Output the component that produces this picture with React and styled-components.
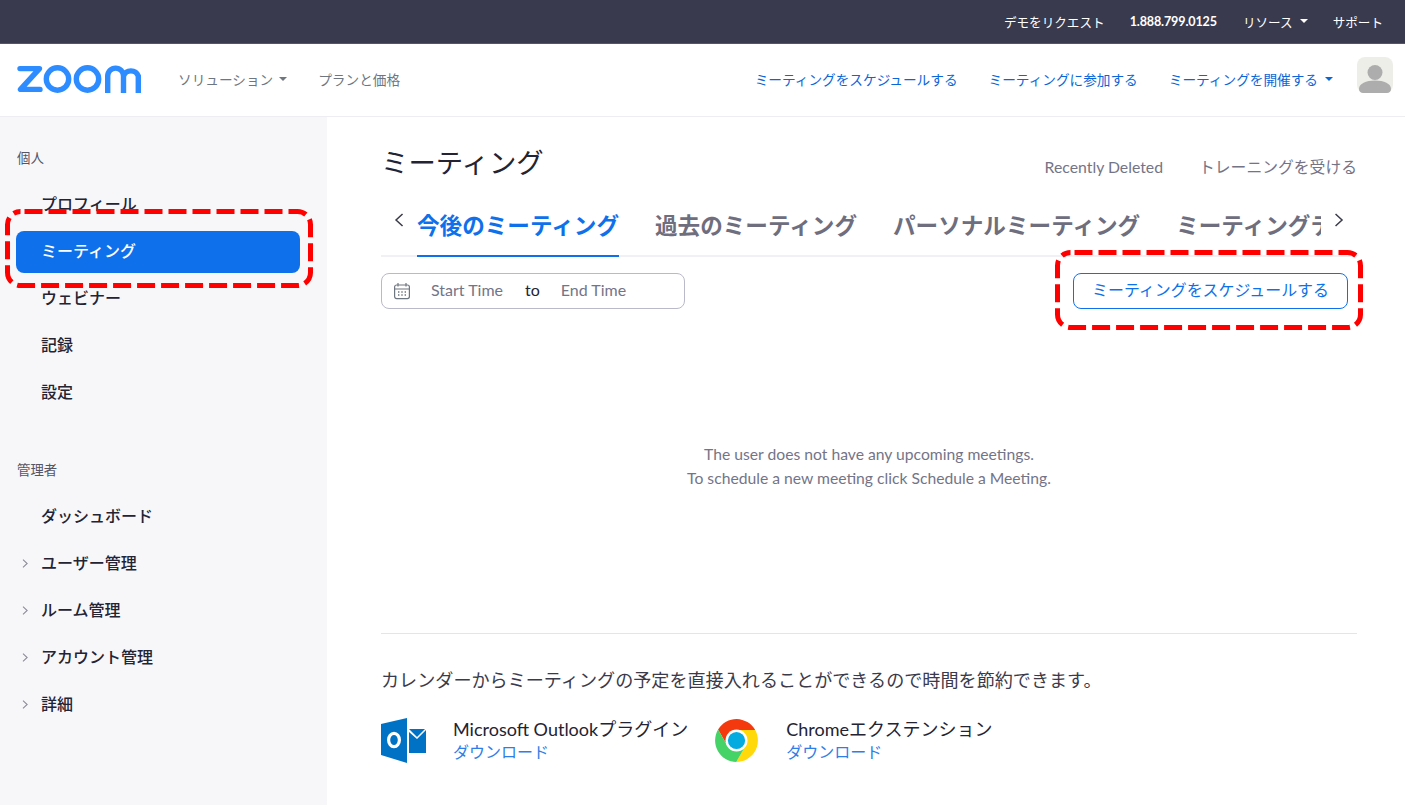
import React from "react";
import styled, { createGlobalStyle } from "styled-components";

const Global = createGlobalStyle`
  html, body { margin: 0; padding: 0; background: #fff; overflow: hidden; }
  body { font-family: Lato, "Noto Sans CJK JP", sans-serif; color: #232333; }
  * { box-sizing: border-box; }
`;

const Page = styled.div`
  position: relative;
  width: 1405px;
  height: 805px;
  display: flex;
  flex-direction: column;
  overflow: hidden;
`;

const TopBar = styled.div`
  height: 44px;
  flex: none;
  background: #393a4e;
  border-bottom: 1px solid #55556a;
  display: flex;
  align-items: center;
  justify-content: flex-end;
  padding: 0 22px 1px 0;
  color: #fff;
  font-size: 12.6px;
`;
const TopItem = styled.span`
  margin-left: ${(p) => p.$gap ?? 26}px;
  font-weight: ${(p) => (p.$strong ? 700 : 400)};
  letter-spacing: ${(p) => (p.$strong ? "-0.15px" : "0")};
  display: flex;
  align-items: center;
  white-space: nowrap;
`;
const Caret = styled.i`
  display: inline-block;
  width: 0;
  height: 0;
  margin-left: ${(p) => p.$gap ?? 6}px;
  border-left: 4px solid transparent;
  border-right: 4px solid transparent;
  border-top: 4px solid ${(p) => p.$color};
`;

const Nav = styled.div`
  height: 73px;
  flex: none;
  background: #fff;
  border-bottom: 1px solid #ededf2;
  display: flex;
  align-items: center;
  font-size: 13.65px;
  padding: 0 12px 3px 17px;
`;
const Logo = styled.svg`
  width: 124px;
  height: 28px;
  flex: none;
  margin-right: 37px;
`;
const NavLink = styled.a`
  display: flex;
  align-items: center;
  white-space: nowrap;
  color: ${(p) => (p.$blue ? "#0b66d8" : "#6e7680")};
  margin-right: ${(p) => p.$gap ?? 0}px;
`;
const Spacer = styled.div`
  flex: 1;
`;
const Avatar = styled.svg`
  width: 36px;
  height: 36px;
  flex: none;
  margin: 0 0 7px 24px;
`;

const Body = styled.div`
  flex: 1;
  display: flex;
  min-height: 0;
`;

const Sidebar = styled.aside`
  width: 327px;
  flex: none;
  background: #f7f7fa;
  padding: 30px 27px 0 16px;
`;
const SideHead = styled.div`
  height: 22px;
  line-height: 22px;
  font-size: 13.4px;
  color: #555566;
  padding-left: 1px;
  margin-bottom: 15px;
  margin-top: ${(p) => p.$top ?? 0}px;
`;
const SideItem = styled.div`
  height: 42px;
  margin-bottom: 5px;
  border-radius: 8px;
  display: flex;
  align-items: center;
  padding: 0 0 5px 5px;
  font-size: 16px;
  font-weight: 500;
  color: ${(p) => (p.$active ? "#fff" : "#232333")};
  background: ${(p) => (p.$active ? "#0e71eb" : "transparent")};
`;
const ArrowSlot = styled.span`
  width: 20px;
  flex: none;
  display: flex;
  align-items: center;
  padding: 3px 0 0 1px;
`;

const Main = styled.main`
  flex: 1;
  padding: 26px 48px 0 54px;
  min-width: 0;
`;
const TitleRow = styled.div`
  height: 40px;
  display: flex;
  justify-content: space-between;
  align-items: center;
  margin-bottom: 26px;
`;
const Title = styled.h1`
  margin: 0;
  font-size: 27.4px;
  line-height: 40px;
  font-weight: 400;
  color: #232333;
`;
const TitleLinks = styled.div`
  display: flex;
  align-items: baseline;
  gap: 36px;
  font-size: 15.8px;
  color: #747487;
  padding-top: 6px;
`;

const TabRow = styled.div`
  height: 48px;
  display: flex;
  box-shadow: inset 0 -2px 0 #f0f0f5;
`;
const Chevron = styled.button`
  width: 36px;
  flex: none;
  border: 0;
  background: none;
  padding: 4px 0 0;
  display: flex;
  justify-content: center;
  align-items: flex-start;
`;
const TabStrip = styled.div`
  flex: 1;
  min-width: 0;
  overflow: hidden;
  display: flex;
  gap: 36px;
`;
const Tab = styled.div`
  flex: none;
  height: 48px;
  line-height: 34px;
  font-size: 22.6px;
  font-weight: 700;
  white-space: nowrap;
  color: ${(p) => (p.$active ? "#0e71eb" : "#6e6e7e")};
  border-bottom: 2px solid ${(p) => (p.$active ? "#0e71eb" : "transparent")};
`;

const Toolbar = styled.div`
  margin-top: 16px;
  height: 36px;
  display: flex;
  justify-content: space-between;
`;
const Picker = styled.div`
  width: 304px;
  border: 1px solid #bab9c9;
  border-radius: 8px;
  display: flex;
  align-items: center;
  padding: 0 0 0 11px;
  font-size: 16px;
  color: #747487;
`;
const PickerField = styled.span`
  margin-left: ${(p) => p.$gap}px;
  margin-top: -4px;
  color: ${(p) => (p.$dark ? "#232333" : "#747487")};
`;
const OutlineButton = styled.button`
  width: 275px;
  margin-right: 9px;
  border: 1px solid #0e71eb;
  border-radius: 8px;
  background: #fff;
  color: #0e71eb;
  font: inherit;
  font-size: 15.95px;
  padding: 0 0 5px;
`;

const Empty = styled.div`
  margin-top: 133px;
  text-align: center;
  font-size: 15.7px;
  line-height: 24px;
  color: #747487;
`;
const Divider = styled.hr`
  margin: 143px 0 0;
  border: 0;
  border-top: 1px solid #e4e4ec;
`;
const Promo = styled.p`
  margin: 34px 0 0;
  font-size: 18.1px;
  line-height: 24px;
  color: #3a3a4a;
`;
const Plugins = styled.div`
  margin-top: 24px;
  display: flex;
  gap: 27px;
`;
const Plugin = styled.div`
  display: flex;
  height: 48px;
`;
const PluginIcon = styled.div`
  width: ${(p) => p.$w}px;
  flex: none;
  display: flex;
  align-items: center;
`;
const PluginText = styled.div`
  font-size: 18px;
  line-height: 23px;
  color: #232333;
  padding-top: 2px;
`;
const Download = styled.a`
  display: block;
  font-size: 16px;
  line-height: 21px;
  color: #2f7de8;
`;

const Highlight = styled.svg`
  position: absolute;
  left: ${(p) => p.$x}px;
  top: ${(p) => p.$y}px;
  width: ${(p) => p.$w}px;
  height: ${(p) => p.$h}px;
  pointer-events: none;
`;

const Mark = ({ x, y, w, h }) => (
  <Highlight $x={x} $y={y} $w={w} $h={h} viewBox={`0 0 ${w} ${h}`}>
    <rect
      x="2.5"
      y="2.5"
      width={w - 5}
      height={h - 5}
      rx="13"
      fill="none"
      stroke="#fe0000"
      strokeWidth="5"
      strokeDasharray="18 6"
      strokeDashoffset="-4"
    />
  </Highlight>
);

const ChevronIcon = ({ dir, size = 14, color = "#3a3a4a", width = 1.5 }) => (
  <svg width={size * 0.72} height={size} viewBox="0 0 10 14" fill="none">
    <path
      d={dir === "left" ? "M8.5 1 L2 7 L8.5 13" : "M1.5 1 L8 7 L1.5 13"}
      stroke={color}
      strokeWidth={width}
    />
  </svg>
);

const Arrow = () => (
  <ArrowSlot>
    <ChevronIcon dir="right" size={9} color="#8a8a98" width={1.6} />
  </ArrowSlot>
);

const CalendarIcon = () => (
  <svg width="18" height="18" viewBox="0 0 18 18" fill="none" stroke="#6e7680" strokeWidth="1.2">
    <rect x="1.6" y="3" width="14.8" height="13.6" rx="2" />
    <path d="M1.6 7 H16.4 M5 1 V4.4 M13 1 V4.4" />
    <path d="M5 10 h1.4 M8.3 10 h1.4 M11.6 10 h1.4 M5 13 h1.4 M8.3 13 h1.4 M11.6 13 h1.4" strokeWidth="1.4" />
  </svg>
);

const OutlookIcon = () => (
  <svg width="46" height="46" viewBox="0 0 46 46" style={{ display: "block" }}>
    <path d="M0 7 L26 1 V46 L0 38 Z" fill="#0072c6" />
    <path d="M28 12 H44 L36 20 Z M28 15 L36 22 L45 13 V36 H28 Z" fill="#0072c6" />
    <ellipse cx="13" cy="23" rx="5.4" ry="6.6" fill="none" stroke="#fff" strokeWidth="3.2" />
  </svg>
);

const ChromeIcon = () => (
  <svg width="43" height="43" viewBox="-21.5 -21.5 43 43" style={{ display: "block" }}>
    <path d="M0 -10.5 L18.7 -10.5 A21.5 21.5 0 0 0 -18.44 -10.95 L-9.1 5.25 Z" fill="#f4390f" />
    <path d="M18.7 -10.5 A21.5 21.5 0 0 1 -0.26 21.45 L9.1 5.25 L0 -10.5 Z" fill="#ffd90a" />
    <path d="M-0.26 21.45 A21.5 21.5 0 0 1 -18.44 -10.95 L-9.1 5.25 L9.1 5.25 Z" fill="#45d267" />
    <circle r="11" fill="#fff" />
    <circle r="8.6" fill="#04abe0" />
  </svg>
);

const personal = ["プロフィール", "ミーティング", "ウェビナー", "記録", "設定"];
const admin = [
  ["ダッシュボード", false],
  ["ユーザー管理", true],
  ["ルーム管理", true],
  ["アカウント管理", true],
  ["詳細", true],
];
const tabs = ["今後のミーティング", "過去のミーティング", "パーソナルミーティング", "ミーティングテンプレート"];

export default function App() {
  return (
    <Page>
      <Global />
      <TopBar>
        <TopItem>デモをリクエスト</TopItem>
        <TopItem $strong $gap={25}>1.888.799.0125</TopItem>
        <TopItem>
          リソース
          <Caret $color="#fff" $gap={7} />
        </TopItem>
        <TopItem $gap={25}>サポート</TopItem>
      </TopBar>
      <Nav>
        <Logo viewBox="0 0 124 28" fill="none" stroke="#2d8cff" strokeWidth="5.4">
          <path d="M3 3.6 H22.5 L3.5 24.4 H23" strokeLinejoin="round" strokeLinecap="round" />
          <circle cx="40.5" cy="14" r="11.2" />
          <circle cx="70.5" cy="14" r="11.2" />
          <path d="M90.7 28 V11 A7.9 7.9 0 0 1 106.5 11 V28 M106.5 11 A7.9 7.9 0 0 1 121.3 11 V28" />
        </Logo>
        <NavLink $gap={31}>
          ソリューション
          <Caret $color="#6e7680" />
        </NavLink>
        <NavLink>プランと価格</NavLink>
        <Spacer />
        <NavLink $blue $gap={31}>ミーティングをスケジュールする</NavLink>
        <NavLink $blue $gap={31}>ミーティングに参加する</NavLink>
        <NavLink $blue>
          ミーティングを開催する
          <Caret $color="#0b66d8" $gap={7} />
        </NavLink>
        <Avatar viewBox="0 0 36 36">
          <rect width="36" height="36" rx="8" fill="#eeeee9" />
          <circle cx="18" cy="15.5" r="7.5" fill="#adadad" />
          <path d="M2 32 C2 26.5 9 23.5 18 23.5 S34 26.5 34 32 C34 34.5 32 36 30 36 H6 C4 36 2 34.5 2 32 Z" fill="#adadad" />
        </Avatar>
      </Nav>
      <Body>
        <Sidebar>
          <SideHead>個人</SideHead>
          {personal.map((t, i) => (
            <SideItem key={t} $active={i === 1}>
              <ArrowSlot />
              {t}
            </SideItem>
          ))}
          <SideHead $top={45}>管理者</SideHead>
          {admin.map(([t, more]) => (
            <SideItem key={t}>
              {more ? <Arrow /> : <ArrowSlot />}
              {t}
            </SideItem>
          ))}
        </Sidebar>
        <Main>
          <TitleRow>
            <Title>ミーティング</Title>
            <TitleLinks>
              <span>Recently Deleted</span>
              <span>トレーニングを受ける</span>
            </TitleLinks>
          </TitleRow>
          <TabRow>
            <Chevron aria-label="前へ">
              <ChevronIcon dir="left" />
            </Chevron>
            <TabStrip>
              {tabs.map((t, i) => (
                <Tab key={t} $active={i === 0}>{t}</Tab>
              ))}
            </TabStrip>
            <Chevron aria-label="次へ">
              <ChevronIcon dir="right" />
            </Chevron>
          </TabRow>
          <Toolbar>
            <Picker>
              <CalendarIcon />
              <PickerField $gap={20}>Start Time</PickerField>
              <PickerField $gap={22} $dark>to</PickerField>
              <PickerField $gap={21}>End Time</PickerField>
            </Picker>
            <OutlineButton>ミーティングをスケジュールする</OutlineButton>
          </Toolbar>
          <Empty>
            The user does not have any upcoming meetings.
            <br />
            To schedule a new meeting click Schedule a Meeting.
          </Empty>
          <Divider />
          <Promo>カレンダーからミーティングの予定を直接入れることができるので時間を節約できます。</Promo>
          <Plugins>
            <Plugin>
              <PluginIcon $w={72}><OutlookIcon /></PluginIcon>
              <PluginText>
                Microsoft Outlookプラグイン
                <Download>ダウンロード</Download>
              </PluginText>
            </Plugin>
            <Plugin>
              <PluginIcon $w={71}><ChromeIcon /></PluginIcon>
              <PluginText>
                Chromeエクステンション
                <Download>ダウンロード</Download>
              </PluginText>
            </Plugin>
          </Plugins>
        </Main>
      </Body>
      <Mark x={5} y={209} w={308} h={79} />
      <Mark x={1055} y={250} w={308} h={80} />
    </Page>
  );
}
